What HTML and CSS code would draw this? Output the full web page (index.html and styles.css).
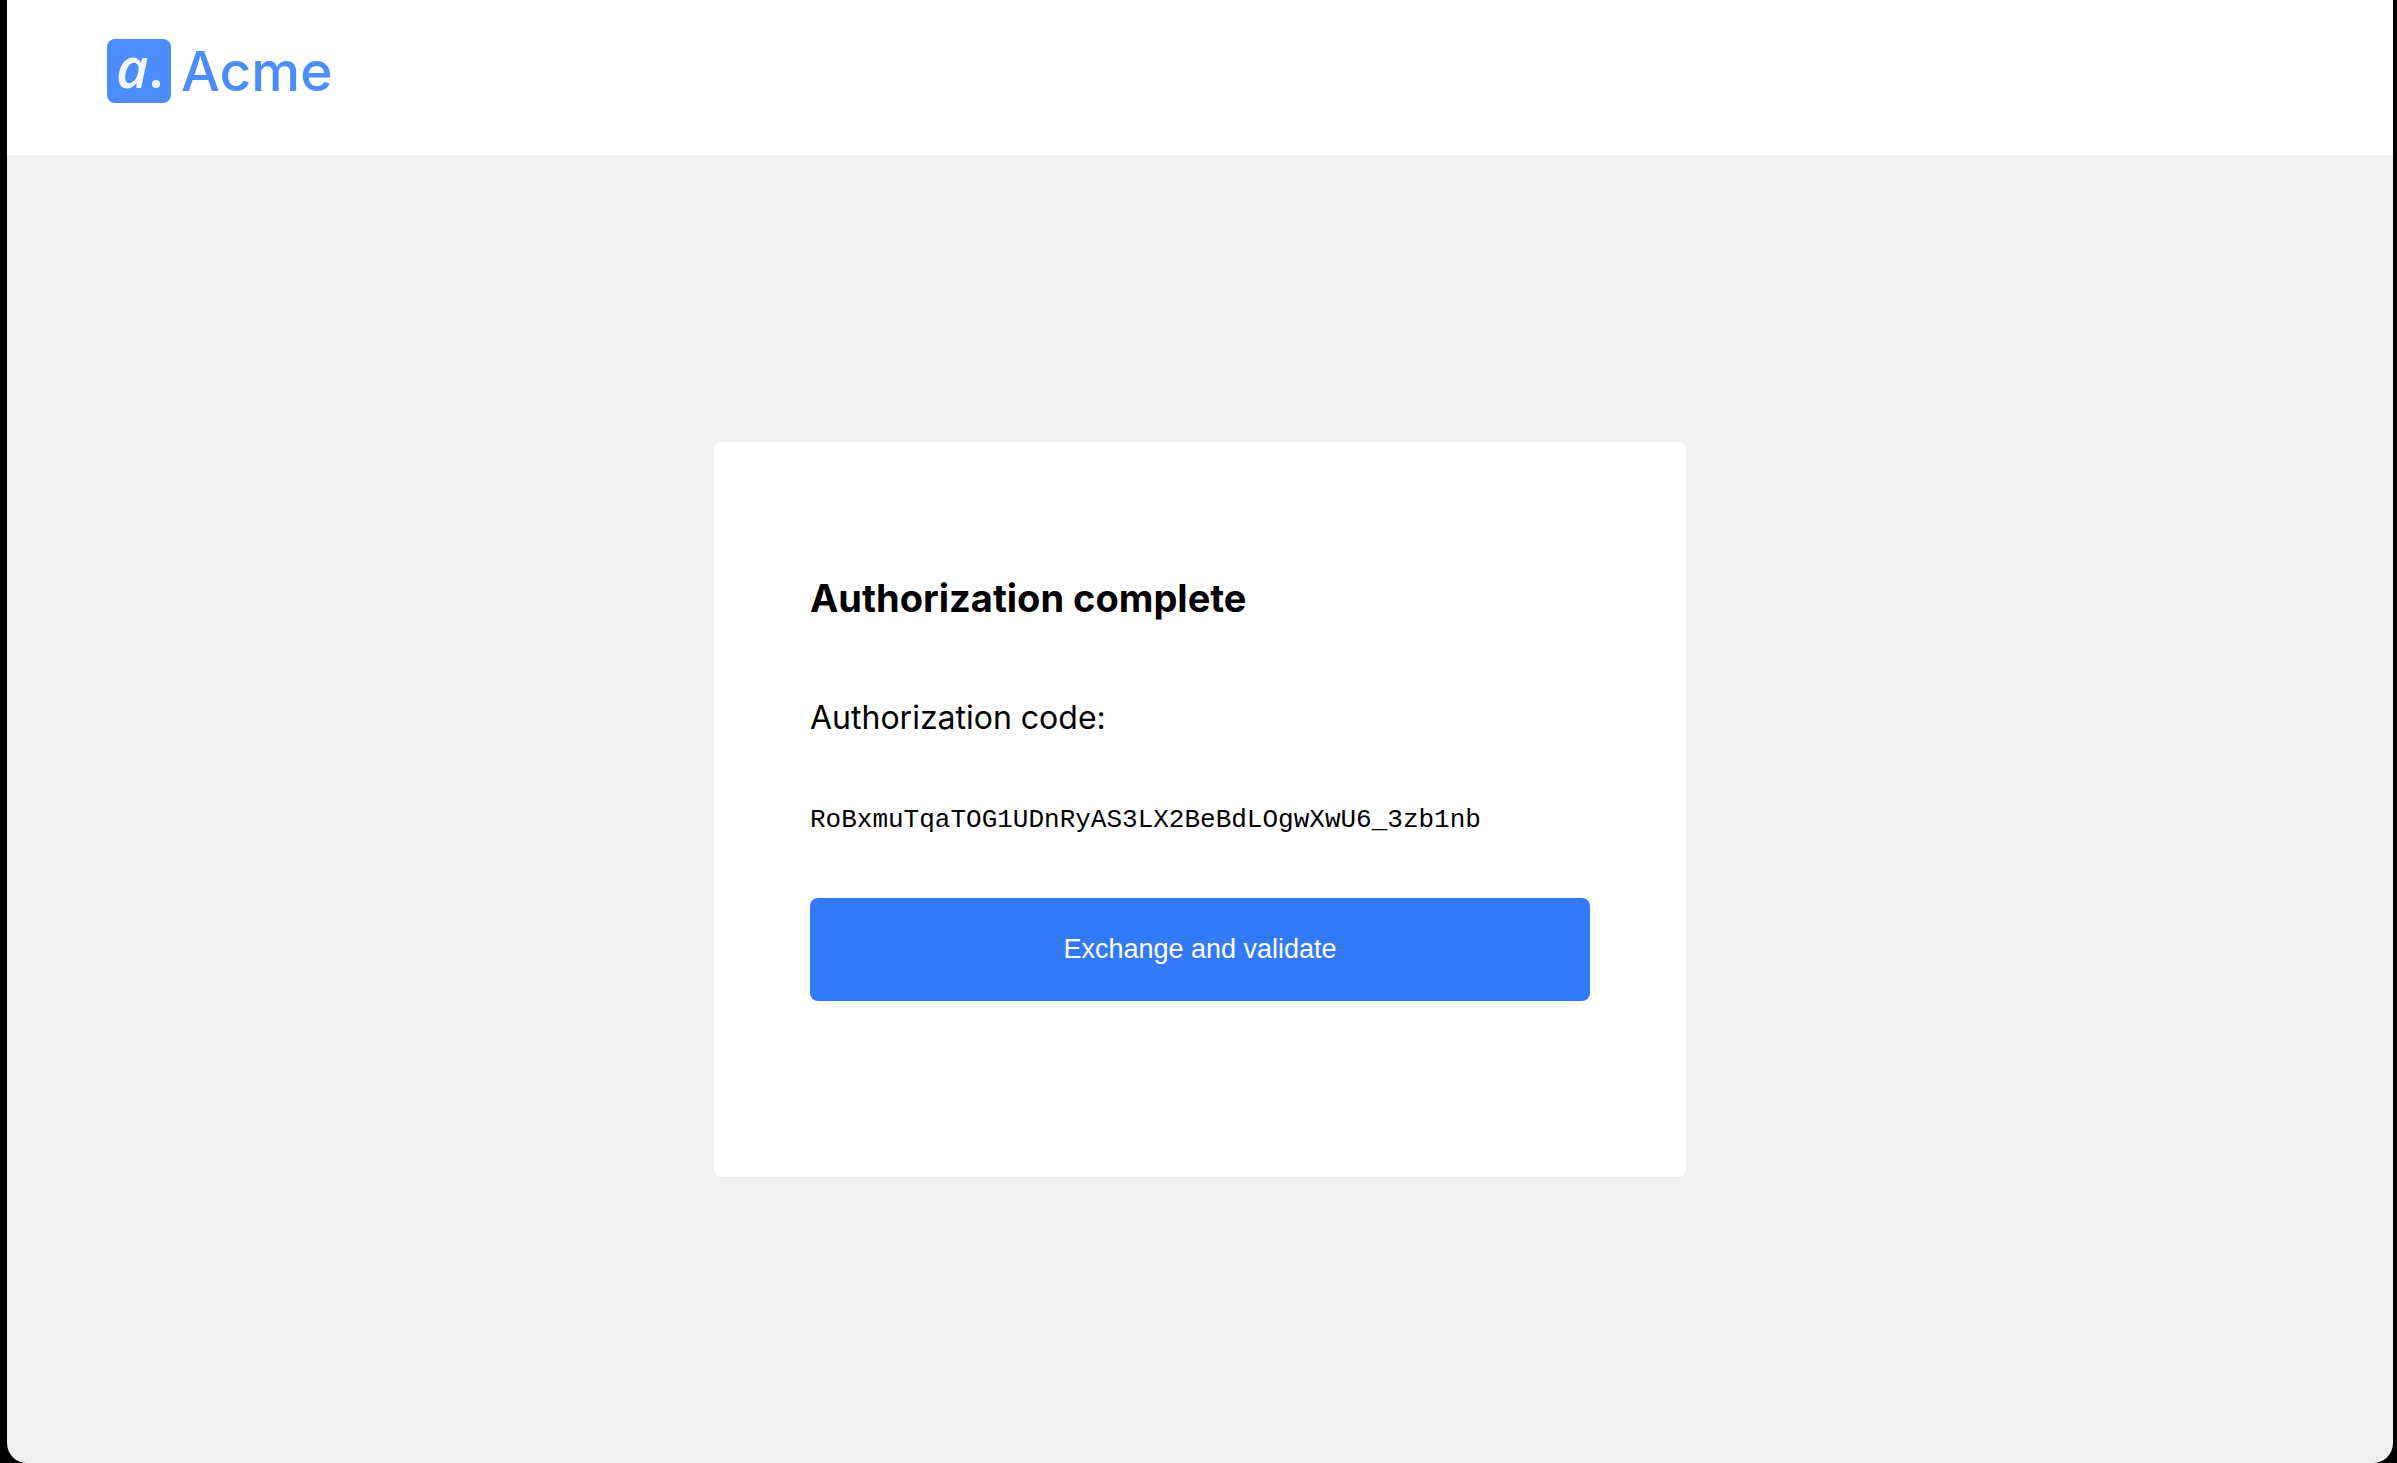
FILE: index.html
```html
<!DOCTYPE html>
<html lang="en">
<head>
  <meta charset="utf-8">
  <meta name="viewport" content="width=device-width, initial-scale=1">
  <title>Authorization complete – Acme</title>
  <link rel="stylesheet" href="styles.css">
</head>
<body>
  <div class="page">
    <header class="header">
      <a class="brand" href="#">
        <svg class="brand-mark" viewBox="0 0 64 64" aria-hidden="true">
          <rect width="64" height="64" rx="8" fill="#4b8dfc"/>
          <text class="brand-letter" x="9" y="49">a</text>
          <circle cx="49" cy="45" r="4" fill="#f5f6fa"/>
        </svg>
        <span class="brand-name">Acme</span>
      </a>
    </header>
    <main class="main">
      <section class="card">
        <h1 class="title">Authorization complete</h1>
        <p class="label">Authorization code:</p>
        <code class="code">RoBxmuTqaTOG1UDnRyAS3LX2BeBdLOgwXwU6_3zb1nb</code>
        <button class="button" type="button">Exchange and validate</button>
      </section>
    </main>
  </div>
</body>
</html>
```
FILE: styles.css
```css
* {
  box-sizing: border-box;
}

body {
  margin: 0;
  background: #000;
  color: #000;
  font-family: Inter, "Liberation Sans", sans-serif;
}

.page {
  display: flex;
  flex-direction: column;
  min-height: 100vh;
  margin: 0 4px 0 7px;
  overflow: hidden;
  border-radius: 0 0 20px 20px;
  background: #f0f0f0;
}

.header {
  display: flex;
  padding: 39px 100px 52px;
  background: #fff;
}

.brand {
  display: flex;
  align-items: center;
  gap: 10px;
  color: #4b8dfc;
  text-decoration: none;
}

.brand-mark {
  width: 64px;
  height: 64px;
  overflow: visible;
}

.brand-letter {
  fill: #f5f6fa;
  font: italic 600 56px "Open Sans", sans-serif;
}

.brand-name {
  font-size: 55px;
  font-weight: 500;
  line-height: 64px;
}

.main {
  display: flex;
  flex: 1;
  align-items: center;
  justify-content: center;
  padding: 48px 24px;
}

.card {
  display: flex;
  flex-direction: column;
  width: 100%;
  max-width: 972px;
  padding: 132px 96px 176px;
  border-radius: 8px;
  background: #fff;
}

.title {
  margin: 0 0 72px;
  font-size: 38px;
  font-weight: 700;
  line-height: 48px;
}

.label {
  margin: 0 0 62px;
  font-size: 32px;
  line-height: 48px;
}

.code {
  margin: 0 0 62px;
  font-family: "Liberation Mono", "Courier New", monospace;
  font-size: 26px;
  line-height: 32px;
  overflow-wrap: anywhere;
}

.button {
  padding: 36px 24px;
  border: 0;
  border-radius: 8px;
  background: #327af8;
  color: #fff;
  font-family: "Liberation Sans", Arial, sans-serif;
  font-size: 27px;
  line-height: 31px;
  cursor: pointer;
}
```
